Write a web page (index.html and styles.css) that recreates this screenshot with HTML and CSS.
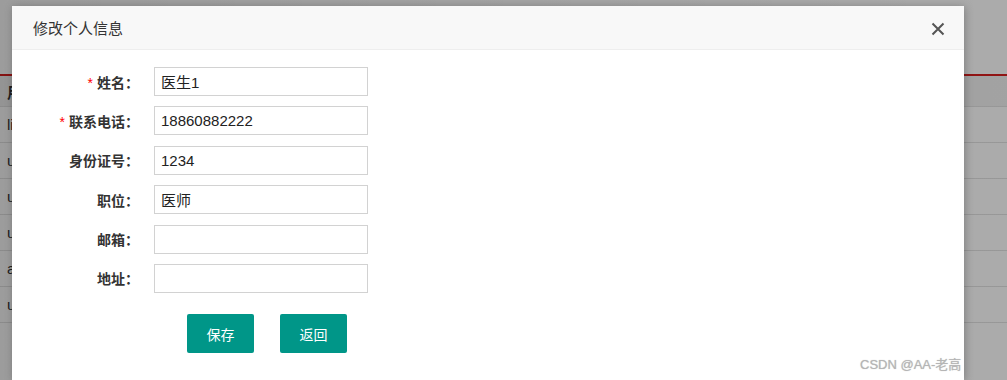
FILE: index.html
```html
<!DOCTYPE html>
<html lang="zh-CN">
<head>
    <meta charset="UTF-8">
    <title>修改个人信息</title>
    <link rel="stylesheet" href="styles.css">
</head>
<body>
    <!-- página por trás do diálogo -->
    <div class="page">
        <div class="topbar"></div>
        <table class="list">
            <thead>
                <tr><th>用户名</th><th>姓名</th><th>电话</th><th>职位</th></tr>
            </thead>
            <tbody>
                <tr><td>lisi</td><td></td><td></td><td></td></tr>
                <tr><td>user1</td><td></td><td></td><td></td></tr>
                <tr><td>user2</td><td></td><td></td><td></td></tr>
                <tr><td>user3</td><td></td><td></td><td></td></tr>
                <tr><td>admin</td><td></td><td></td><td></td></tr>
                <tr><td>user4</td><td></td><td></td><td></td></tr>
            </tbody>
        </table>
    </div>

    <div class="shade"></div>

    <div class="dialog">
        <div class="dialog-title">
            <span>修改个人信息</span>
            <svg class="close" width="14" height="14" viewBox="0 0 14 14">
                <path d="M1.5 1.5 L12.5 12.5 M12.5 1.5 L1.5 12.5" stroke="#555" stroke-width="2" fill="none"/>
            </svg>
        </div>
        <form class="dialog-body">
            <div class="row">
                <label><span class="req">*</span>姓名：</label>
                <input type="text" value="医生1">
            </div>
            <div class="row">
                <label><span class="req">*</span>联系电话：</label>
                <input type="text" value="18860882222">
            </div>
            <div class="row">
                <label>身份证号：</label>
                <input type="text" value="1234">
            </div>
            <div class="row">
                <label>职位：</label>
                <input type="text" value="医师">
            </div>
            <div class="row">
                <label>邮箱：</label>
                <input type="text" value="">
            </div>
            <div class="row">
                <label>地址：</label>
                <input type="text" value="">
            </div>
            <div class="actions">
                <button type="button" class="btn">保存</button>
                <button type="button" class="btn">返回</button>
            </div>
        </form>
    </div>

    <div class="watermark">CSDN @AA-老高</div>
</body>
</html>
```

FILE: styles.css
```css
/* Geral */
body {
    margin: 0;
    padding: 0;
    width: 1007px;
    height: 380px;
    overflow: hidden;
    position: relative;
    background-color: #ffffff;
    font-family: "Liberation Sans", "Noto Sans CJK SC", sans-serif;
    color: #333;
}

/* Página de fundo */
.topbar {
    height: 74px;
    border-bottom: 2px solid #d81e1e;
}

.list {
    width: 100%;
    border-collapse: collapse;
    font-size: 15px;
}

.list th,
.list td {
    height: 35px;
    padding: 0 7px;
    text-align: left;
    border-bottom: 1px solid #e2e2e2;
    color: #333;
}

.list th {
    height: 30px;
    background-color: #f2f2f2;
    font-weight: bold;
}

/* Camada escura */
.shade {
    position: absolute;
    top: 0;
    left: 0;
    right: 0;
    bottom: 0;
    background: linear-gradient(to right, rgba(0, 0, 0, 0.39), rgba(0, 0, 0, 0.33));
}

/* Janela de diálogo */
.dialog {
    position: absolute;
    top: 6px;
    left: 12px;
    bottom: 0;
    width: 952px;
    background-color: #fff;
    box-shadow: 1px 1px 8px rgba(0, 0, 0, 0.25);
}

.dialog-title {
    height: 43px;
    border-bottom: 1px solid #eee;
    background-color: #f8f8f8;
    display: flex;
    align-items: center;
    justify-content: space-between;
    padding: 0 19px 0 21px;
    font-size: 15px;
    color: #333;
}

.close {
    display: block;
    margin-top: 2px;
}

.dialog-body {
    padding-top: 17px;
    display: flex;
    flex-direction: column;
    gap: 10.4px;
}

.row {
    display: flex;
    align-items: center;
}

.row label {
    width: 127px;
    text-align: right;
    font-size: 14px;
    font-weight: bold;
    color: #333;
    margin-right: 15px;
}

.req {
    color: #f00;
    font-weight: normal;
    margin-right: 4px;
}

.row input {
    box-sizing: border-box;
    width: 214px;
    height: 29px;
    border: 1px solid #d2d2d2;
    padding: 0 6px;
    font-family: "Liberation Sans", "Noto Sans CJK SC", sans-serif;
    font-size: 15px;
    color: #222;
    outline: none;
}

.actions {
    display: flex;
    gap: 26px;
    margin-top: 11px;
    margin-left: 175px;
}

.btn {
    width: 67px;
    height: 39px;
    border: none;
    border-radius: 2px;
    background-color: #009688;
    color: #fff;
    font-family: "Noto Sans CJK SC", sans-serif;
    font-size: 14px;
}

/* Marca d'água */
.watermark {
    position: absolute;
    left: 860px;
    top: 354px;
    font-size: 13px;
    color: #b5b5b5;
    text-shadow: 0 0 1px rgba(0, 0, 0, 0.25);
}
```
